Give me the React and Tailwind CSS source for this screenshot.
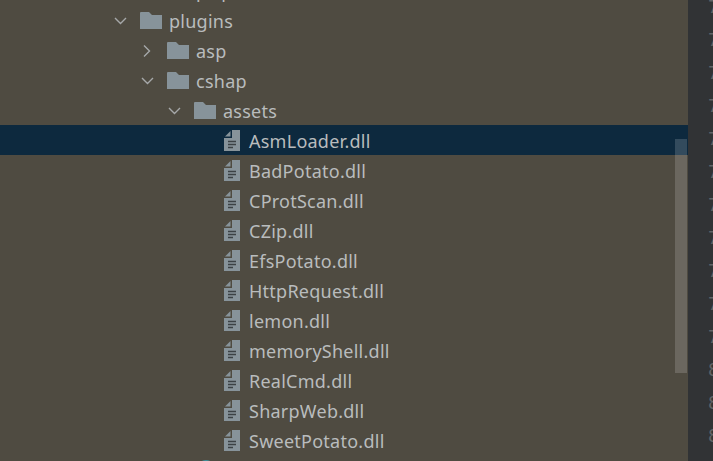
const files = [
  "AsmLoader.dll",
  "BadPotato.dll",
  "CProtScan.dll",
  "CZip.dll",
  "EfsPotato.dll",
  "HttpRequest.dll",
  "lemon.dll",
  "memoryShell.dll",
  "RealCmd.dll",
  "SharpWeb.dll",
  "SweetPotato.dll",
];

const lineNums = ["7", "7", "7", "7", "7", "7", "7", "7", "7", "7", "7", "8", "8", "8"];

function Chevron({ open }) {
  return (
    <svg width="14" height="14" viewBox="0 0 14 14" fill="none" stroke="#a6a8a9" strokeWidth="1.4">
      {open ? <path d="M2 4l5.500 5.500L13 4" /> : <path d="M4 1.500L9.500 7 4 12.500" />}
    </svg>
  );
}

function Folder() {
  return (
    <svg width="22" height="17" viewBox="0 0 22 17" fill="#87939a">
      <path d="M0 1a1 1 0 0 1 1-1h8l3 3h10v14H0z" />
    </svg>
  );
}

function FileIcon() {
  return (
    <svg width="16" height="21" viewBox="0 0 16 21">
      <path d="M8 0h8v21H0V8h8z" fill="#87939a" />
      <path d="M6.500 1v5.500H1z" fill="#87939a" />
      <path d="M4 11.500h8M4 14.500h8M4 17.500h5" stroke="#3c4245" strokeWidth="1.300" fill="none" />
    </svg>
  );
}

function FolderRow({ label, indent, open }) {
  return (
    <div className={`flex h-[30px] items-center pt-[1px] ${indent}`}>
      <span className="flex w-[27px] shrink-0">
        <Chevron open={open} />
      </span>
      <Folder />
      <span className="ml-[7px] leading-[26px]">{label}</span>
    </div>
  );
}

function FileRow({ label, selected }) {
  return (
    <div className={`flex h-[30px] items-center pl-[224px] pt-[1px] ${selected ? "bg-[#0d293e]" : ""}`}>
      <FileIcon />
      <span className="ml-[9px] leading-[26px]">{label}</span>
    </div>
  );
}

export default function App() {
  return (
    <div className="flex h-[461px] w-[713px] overflow-hidden bg-[#4f4b41] font-['Noto_Sans',sans-serif] text-[18px] tracking-[0.25px] text-[#b9bcbd]">
      <div className="relative w-[688px] shrink-0 overflow-hidden">
        <div className="-mt-[25px]">
          <FolderRow label="pwp" indent="pl-[140px]" />
          <FolderRow label="plugins" indent="pl-[113px]" open />
          <FolderRow label="asp" indent="pl-[140px]" />
          <FolderRow label="cshap" indent="pl-[140px]" open />
          <FolderRow label="assets" indent="pl-[167px]" open />
          {files.map((f, i) => (
            <FileRow key={f} label={f} selected={i === 0} />
          ))}
          <div className="flex h-[30px] items-center pl-[197px]">
            <span className="h-[20px] w-[18px] rounded-full bg-[#3f8f9b]" />
          </div>
        </div>
        <div className="absolute left-[675px] top-[139px] h-[234px] w-[12px] bg-white/[0.16]" />
      </div>
      <div className="flex-1 overflow-hidden bg-[#313335] pl-[20px] font-['DejaVu_Sans_Mono',monospace] text-[18px] leading-[33px] tracking-normal text-[#606366]">
        <div className="-mt-[10px]">
          {lineNums.map((n, i) => (
            <div key={i} className="h-[33px]">
              {n}
            </div>
          ))}
        </div>
      </div>
    </div>
  );
}
